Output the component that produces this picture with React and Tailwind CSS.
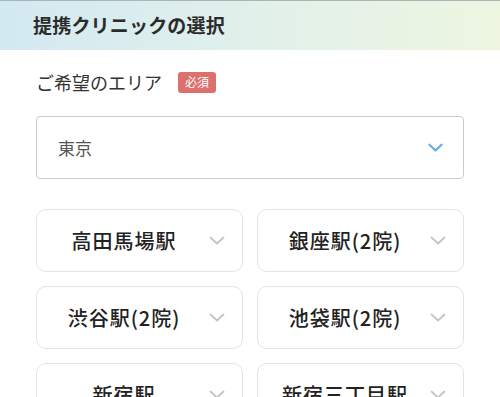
const FONT = { fontFamily: '"Noto Sans CJK JP", "Noto Sans", sans-serif' };

const stations = [
  "高田馬場駅",
  "銀座駅(2院)",
  "渋谷駅(2院)",
  "池袋駅(2院)",
  "新宿駅",
  "新宿三丁目駅",
];

const Chevron = ({ className, strokeWidth = 2 }) => (
  <svg viewBox="0 0 16 10" className={className} fill="none">
    <path
      d="M1.5 1.5 L8 7.5 L14.5 1.5"
      stroke="currentColor"
      strokeWidth={strokeWidth}
      strokeLinecap="round"
      strokeLinejoin="round"
    />
  </svg>
);

export default function App() {
  return (
    <div className="w-[500px] h-[397px] overflow-hidden bg-white" style={FONT}>
      <div className="h-[50px] border-t border-[#a9b6b6] bg-gradient-to-r from-[#d3e9f2] via-[#e1f0ea] to-[#eef6e1] flex items-center px-[33px]">
        <h2 className="text-[19px] font-bold text-[#2b2b2b] tracking-[0.01em]">
          提携クリニックの選択
        </h2>
      </div>
      <div className="px-[36px]">
        <div className="pt-[21px] h-[43px] flex items-center gap-[16px]">
          <span className="text-[18px] text-[#333] leading-none">ご希望のエリア</span>
          <span className="bg-[#db706c] text-white text-[12px] leading-none rounded-[3px] w-[38px] h-[21px] flex items-center justify-center">
            必須
          </span>
        </div>
        <div className="mt-[23px] h-[63px] border border-[#cbcbcb] rounded-[4px] flex items-center justify-between pl-[21px] pr-[20px]">
          <span className="text-[17px] text-[#555]">東京</span>
          <Chevron className="w-[15px] h-[10px] text-[#6eaedb]" strokeWidth={2.4} />
        </div>
        <div className="mt-[30px] grid grid-cols-2 gap-[14px]">
          {stations.map((s) => (
            <div
              key={s}
              className="h-[63px] border border-[#e3e3e3] rounded-[10px] flex items-center pl-4 pr-[17px] gap-[14px]"
            >
              <span className="flex-1 text-center text-[20px] font-medium text-[#222] tracking-[0.05em] whitespace-nowrap">
                {s}
              </span>
              <Chevron className="w-[16px] h-[10px] text-[#c4c4c4]" strokeWidth={1.8} />
            </div>
          ))}
        </div>
      </div>
    </div>
  );
}
